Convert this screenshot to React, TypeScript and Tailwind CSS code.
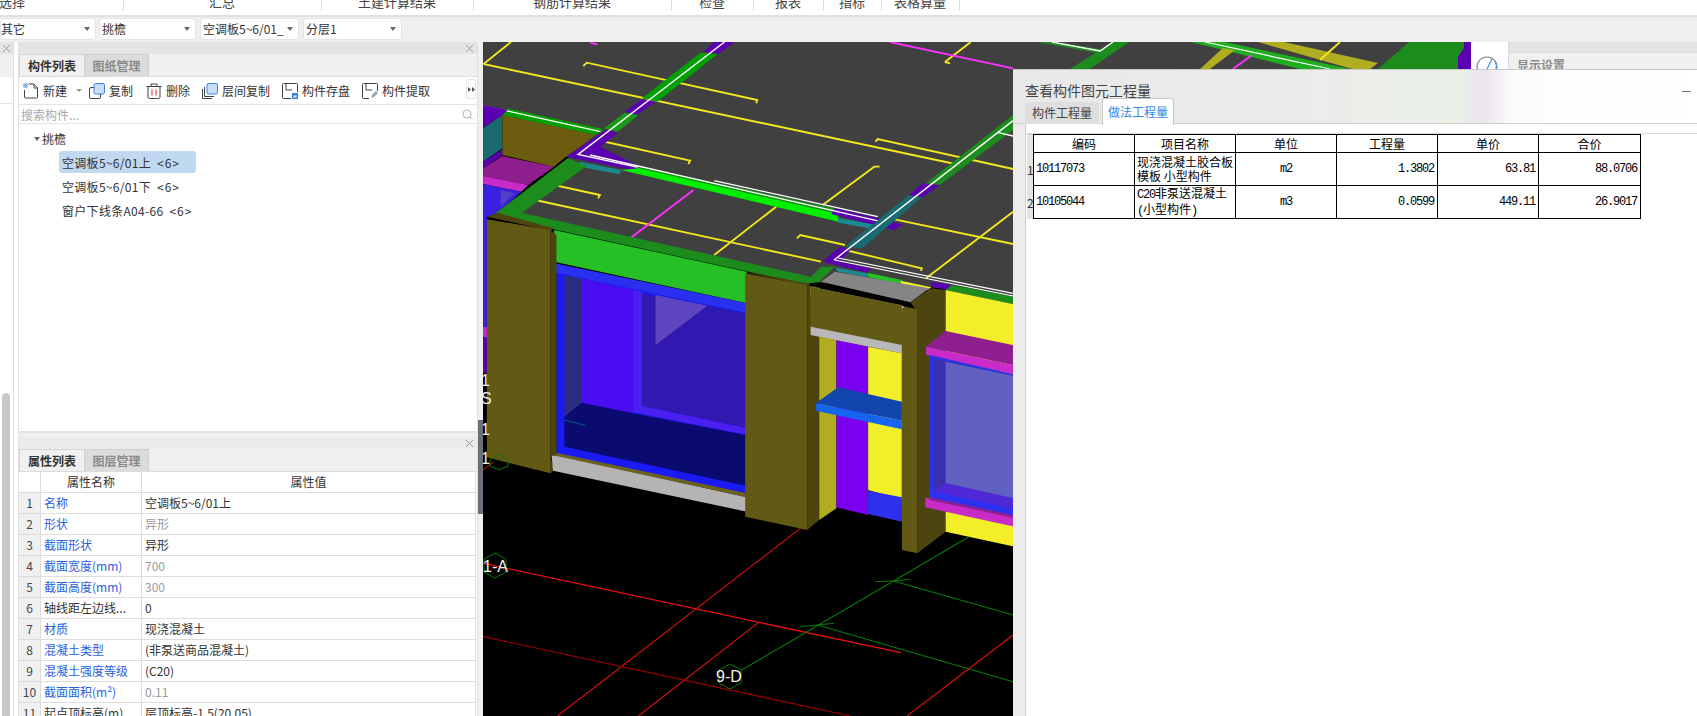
import React from "react";

const FONT = { fontFamily: '"Noto Sans CJK SC", "Liberation Sans", sans-serif' };
const MONO = { fontFamily: '"Liberation Mono", monospace' };

const P = ({ p, f }: { p: string; f: string }) => <polygon points={p} fill={f} />;
const L = ({ p, c = "#f2e81e", w = 1.9 }: { p: string; c?: string; w?: number }) => (
  <polyline points={p} fill="none" stroke={c} strokeWidth={w} vectorEffect="non-scaling-stroke" />
);

const OL = "#625a14";
const OD = "#4d4510";
const GR = "#1c8c1c";
const PU = "#5b00b0";
const TE = "#1a6b70";
const TE2 = "#1a8a90";
const MD = "#8f1f8f";
const MB = "#c82bc8";
const YE = "#f2ef2a";

function Scene() {
  return (
    <svg className="block absolute left-0 top-0" width={988} height={674} viewBox="483 42 988 674">
      <rect x={483} y={42} width={988} height={674} fill="#000" />
      <polygon points="1000,42 1500,42 1500,500 1000,500" fill="#404040" />

      <g transform="translate(480,40) scale(0.34439,0.33333)">
        {/* roof */}
        <P p="9,6 1560,6 1560,800 1350,745 950,725 50,520 260,350 9,195" f="#404040" />
        {/* roof thin lines */}
        <L p="10,72 1380,372" />
        <L p="10,72 90,6" />
        <L p="300,78 310,68 805,180 802,190" />
        <L p="340,300 610,362 605,372" />
        <L p="215,435 348,465 343,475" />
        <L p="160,480 990,665" />
        <L p="680,645 860,500" />
        <L p="995,495 1145,380 1160,380" />
        <L p="920,595 930,585 1060,615" />
        <L p="1060,630 1283,685 1280,693" />
        <L p="1148,305 1155,297 1548,387" />
        <L p="1190,535 1548,612" />
        <L p="1295,715 1548,515" />
        <L p="1350,66 1425,6" />
        <L p="1350,66 1365,70" />
        <L p="440,592 620,450" c="#ff30ff" />
        <L p="1190,6 1548,85" c="#ff30ff" />
        <L p="320,8 340,13" c="#ff30ff" />
        {/* depth band */}
        <P p="650,35 680,6 740,6 690,42" f={PU} />
        <P p="640,38 690,42 515,185 470,175" f="#00a000" />
        <P p="470,178 510,185 455,225 420,215" f={PU} />
        <P p="420,218 460,225 400,275 360,265" f="#1a9a1a" />
        <P p="365,270 400,278 350,320 460,378 450,392 250,350" f={PU} />
        <P p="65,225 80,205 360,268 335,285" f="#00a000" />
        <L p="710,6 285,343 460,382" c="#fff" w={1.4} />
        <L p="9,198 75,212 350,275" c="#fff" w={1.4} />
        {/* middle band */}
        <P p="290,365 410,390 405,403 290,380" f={TE2} />
        <P p="460,378 1030,505 1020,525 450,395" f="#1a8c1a" />
        <P p="410,390 460,385 1040,522 1040,545" f="#00ef00" />
        <P p="1030,505 1165,537 1230,555 1200,570 1020,522" f={PU} />
        <P p="1040,533 1150,555 1130,565 1040,548" f={TE2} />
        <L p="320,345 1165,545" c="#fff" w={1.3} />
        <L p="680,422 1155,530" c="#fff" w={1.3} />
        {/* right depth band */}
        <P p="1060,620 1110,625 1285,470 1245,465" f={TE} />
        <P p="1245,465 1285,430 1335,435 1285,472" f={PU} />
        <P p="1295,430 1335,435 1548,270 1548,225" f={GR} />
        <P p="995,665 1045,620 1075,630 1045,665 1135,685 1125,698" f={PU} />
        <L p="1028,660 1548,242" c="#fff" w={1.4} />
        <L p="1505,278 1548,288" c="#fff" w={1.4} />
        {/* right front band */}
        <P p="1125,698 1225,720 1220,732 1127,712" f="#26bf26" />
        <P p="1030,682 1125,700 1125,712 1040,695" f={TE2} />
        <P p="1222,722 1310,742 1300,750 1222,732" f={YE} />
        <P p="1310,725 1375,735 1360,750 1310,740" f={PU} />
        <P p="1370,735 1560,772 1560,795 1352,750" f={GR} />
        <L p="1030,660 1548,768" c="#fff" w={1.2} />
        <L p="1040,654 1548,760" c="#fff" w={1.2} />
        <P p="945,728 990,680 1030,680 985,725" f={GR} />

        {/* far left stack */}
        <P p="9,195 80,210 65,225 9,265" f={PU} />
        <P p="9,265 65,225 65,325 9,365" f={TE} />
        <P p="9,365 65,328 65,345 9,385" f={PU} />
        <P p="65,225 335,285 250,350 215,380 65,345" f="#6b5c10" />
        <P p="9,385 65,348 215,380 140,435 9,408" f={MD} />
        <P p="9,408 140,435 120,455 9,432" f={MB} />
        <P p="9,432 120,455 50,520 20,530 20,900 9,900" f="#3a20e0" />
        <P p="60,450 100,460 60,500" f="#5040c8" />
        <P p="9,860 20,862 20,892 9,890" f={MB} />
        <P p="9,890 20,892 20,1000 9,1000" f="#5b00b0" />

        {/* roof edge */}
        <P p="255,355 310,378 120,520 45,520" f={GR} />
        <P p="45,520 120,518 950,708 990,725 945,732 200,565" f={GR} />
        {/* fascia */}
        <P p="215,570 775,695 775,790 215,665" f="#26bf26" />

        {/* main window */}
        <P p="222,695 775,820 775,1365 222,1240" f="#1a1af5" />
        <P p="245,705 295,716 295,1090 245,1130" f="#2d2d80" />
        <P p="295,716 445,750 445,1120 295,1090" f="#4a0cf0" />
        <P p="470,760 775,822 775,1165 470,1098" f="#3018b0" />
        <P p="510,765 660,797 510,915" f="#6045c0" />
        <P p="445,750 470,755 470,1098 775,1165 775,1185 445,1116" f="#4a20f0" />
        <P p="245,1130 295,1088 445,1120 775,1186 775,1338 245,1220" f="#0a0a70" />
        <L p="245,1140 308,1157" c="#0b5a70" w={1} />
        <P p="210,668 775,790 775,820 210,695" f="#2a30f0" />

        {/* left column */}
        <P p="20,530 50,518 215,565 205,572" f={OD} />
        <P p="20,538 205,570 205,1300 20,1252" f={OL} />
        <P p="205,570 222,585 222,1245 205,1250" f={OD} />
        <P p="205,1250 215,1290 205,1300" f={OD} />

        {/* sill */}
        <P p="208,1248 225,1246 775,1372 775,1415 212,1292" f="#b4b4b4" />
        <P p="222,1238 775,1360 775,1372 222,1248" f="#6b6020" />

        {/* centre column */}
        <P p="770,697 790,698 960,732 950,738" f={OD} />
        <P p="770,700 950,736 950,1470 770,1430" f={OL} />
        <P p="950,736 985,742 985,1440 950,1470" f={OD} />

        {/* bay between columns */}
        <P p="990,725 1030,695 1305,745 1250,787" f="#858585" />
        <P p="960,740 1270,808 1270,950 960,885" f={OL} />
        <P p="960,740 1230,798 1225,822 960,765" f="#b8b8b8" />

        <g transform="translate(0,780)">
          <P p="985,110 1035,120 1035,625 985,660" f="#b0ad20" />
          <P p="1035,120 1127,140 1127,645 1035,622" f="#7b00f0" />
          <P p="1127,140 1225,160 1225,600 1127,570" f={YE} />
          <P p="1127,572 1225,592 1225,665 1127,642" f="#2e30f0" />
          <P p="1040,262 1225,305 1225,362 975,310" f="#1245ae" />
          <P p="975,310 1225,362 1225,388 975,332" f="#1665f0" />
          <P p="960,-40 1225,15 1225,135 960,80" f={OL} />
          <P p="960,80 1225,135 1225,160 960,105" f="#b8b8b8" />
          {/* right column */}
          <P p="1225,25 1270,35 1270,760 1225,750" f={OL} />
          <P p="1270,35 1250,7 1310,-35 1352,-30 1352,695 1270,760" f={OD} />
          {/* right bay */}
          <P p="1352,-30 1560,15 1560,742 1352,695" f={YE} />
          <P p="1352,93 1560,138 1560,198 1295,140" f={MD} />
          <P p="1295,140 1560,198 1560,225 1295,165" f={MB} />
          <P p="1305,165 1560,225 1560,652 1305,595" f="#2e30f0" />
          <P p="1318,175 1560,230 1560,628 1318,570" f="#3a30b0" />
          <P p="1352,185 1560,230 1560,598 1352,550" f="#6060c0" />
          <P p="1318,575 1352,550 1560,598 1560,628" f="#5028d8" />
          <P p="1293,593 1560,652 1560,682 1293,622" f={MB} />
          <P p="1305,592 1560,648 1560,656 1305,600" f={MD} />
          {/* ground grid */}
          <L p="9,790 1222,1058" c="#e81010" w={1.3} />
          <L p="930,685 225,1248" c="#e01010" w={1.1} />
          <L p="808,968 460,1248" c="#e01010" w={1.1} />
          <L p="1548,1005 1240,1248" c="#e01010" w={1.1} />
          <L p="9,1010 1075,1248" c="#a00000" w={1.1} />
          <L p="9,510 40,485" c="#e01010" w={1} />
          <L p="760,1110 1420,710" c="#0a7a0a" w={1.1} />
          <L p="1200,843 1548,945" c="#0a7a0a" w={1.1} />
          <L p="980,975 1548,1145" c="#0a7a0a" w={1.1} />
          <L p="1148,845 1200,843 1248,838" c="#0a7a0a" w={1} />
          <L p="928,980 980,975 1028,970" c="#0a7a0a" w={1} />
        </g>
      </g>

      {/* top strip behind the dialog, in page coordinates */}
      <polygon points="1037,42 1055,42 1106,50 1103,54" fill={GR} />
      <polygon points="1100,50 1113,42 1129,42 1090,69 1070,69" fill={GR} />
      <L p="1052,42 1100,51 1113,42" c="#fff" w={1.4} />
      <polygon points="1191,42 1225,42 1350,69 1300,69" fill="#1fae1f" />
      <L p="1205,42 1330,69" c="#fff" w={1.2} />
      <polygon points="1200,69 1223,48 1235,50 1210,69" fill="#b0ad20" />
      <polygon points="1258,42 1284,42 1378,63 1370,69 1352,69" fill="#b0ad20" />
      <L p="1233,69 1252,55" c="#ff30ff" />
      <L p="1320,60 1340,42" />
      <polygon points="1378,69 1409,42 1464,42 1464,48 1458,57 1458,69" fill={GR} />
      <polygon points="1458,57 1464,48 1464,42 1471,42 1471,69 1458,69" fill={PU} />

      {/* axis markers */}
      <polygon points="495,553 506,559 506,572 495,578 484,572 484,559" fill="none" stroke="#0a7a0a" />
      <polygon points="730,664 741,670 741,683 730,689 719,683 719,670" fill="none" stroke="#0a7a0a" />
      <polygon points="499,454 508,460 508,466 499,470 490,466 490,460" fill="none" stroke="#0a7a0a" />
      <g fontFamily='"Liberation Sans", sans-serif' fontSize={16} fill="#f0f0f0">
        <text x={483} y={572}>1-A</text>
        <text x={716} y={682}>9-D</text>
        <text x={481} y={386}>1</text>
        <text x={481} y={404}>S</text>
        <text x={481} y={435}>1</text>
        <text x={481} y={464}>1</text>
      </g>
    </svg>
  );
}

/* ---------- small toolbar icons ---------- */
const IconNew = () => (
  <svg width="16" height="16" viewBox="0 0 16 16" fill="none">
    <path d="M1.5 7v7a1 1 0 0 0 1 1h11a1 1 0 0 0 1-1V5L11 1H5.5" stroke="#444" />
    <path d="M11 1v4h3.5" stroke="#444" />
    <rect x="0.5" y="0.5" width="4" height="4" fill="#3b82e0" />
    <path d="M1 1h1v1H1zM3 1h1v1H3zM2 2h1v1H2zM1 3h1v1H1zM3 3h1v1H3z" fill="#cfe3fb" />
  </svg>
);
const IconCopy = () => (
  <svg width="16" height="16" viewBox="0 0 16 16" fill="none">
    <rect x="0.5" y="4.5" width="11" height="11" rx="1.5" stroke="#444" fill="#fff" />
    <rect x="5" y="0.5" width="10.5" height="10.5" rx="1.5" stroke="#3b82e0" fill="#c9dff8" />
  </svg>
);
const IconDelete = () => (
  <svg width="16" height="16" viewBox="0 0 16 16" fill="none">
    <path d="M0.5 3.5h15M5 3.5V1h6v2.5" stroke="#444" />
    <path d="M2 3.5V14a1.5 1.5 0 0 0 1.5 1.5h9A1.5 1.5 0 0 0 14 14V3.5" stroke="#444" />
    <path d="M6 6.5v6M10 6.5v6" stroke="#d92020" />
  </svg>
);
const IconFloor = () => (
  <svg width="16" height="16" viewBox="0 0 16 16" fill="none">
    <path d="M0.5 6v9.5H10" stroke="#444" />
    <path d="M2.5 4v9.5H12" stroke="#444" />
    <rect x="5" y="0.5" width="10.5" height="10.5" rx="1.5" stroke="#3b82e0" fill="#c9dff8" />
  </svg>
);
const IconSave = () => (
  <svg width="16" height="16" viewBox="0 0 16 16" fill="none">
    <path d="M9 15.5H1.5a1 1 0 0 1-1-1v-13a1 1 0 0 1 1-1h13a1 1 0 0 1 1 1V9" stroke="#444" />
    <path d="M4 1v6h6" stroke="#444" />
    <rect x="10" y="10" width="6" height="6" fill="#3b82e0" />
    <rect x="11.5" y="12.5" width="3" height="2" fill="#e6f0fc" />
  </svg>
);
const IconExtract = () => (
  <svg width="16" height="16" viewBox="0 0 16 16" fill="none">
    <path d="M7 15.5H1.5a1 1 0 0 1-1-1v-13a1 1 0 0 1 1-1h13a1 1 0 0 1 1 1V8" stroke="#444" />
    <path d="M4 1v6h6" stroke="#444" />
    <path d="M9 15l1-3 4-4 2 2-4 4z" fill="#9aa3ad" />
  </svg>
);

const Close = ({ c = "#9a9a9a" }: { c?: string }) => (
  <svg width="9" height="9" viewBox="0 0 9 9" stroke={c} fill="none">
    <path d="M1 1l7 7M8 1L1 8" />
  </svg>
);

const Caret = () => <span className="w-0 h-0 border-x-[3px] border-x-transparent border-t-[4px] border-t-[#666]" />;

const topTabs = [
  { w: 124, t: "选择", cls: "justify-start" },
  { w: 198, t: "汇总", cls: "justify-center" },
  { w: 152, t: "土建计算结果", cls: "justify-center" },
  { w: 198, t: "钢筋计算结果", cls: "justify-center" },
  { w: 82, t: "检查", cls: "justify-center" },
  { w: 70, t: "报表", cls: "justify-center" },
  { w: 58, t: "指标", cls: "justify-center" },
  { w: 78, t: "表格算量", cls: "justify-center" },
];

const selects = [
  { w: 96, t: "其它", ml: 0 },
  { w: 97, t: "挑檐", ml: 3 },
  { w: 99, t: "空调板5~6/01_", ml: 4 },
  { w: 99, t: "分层1", ml: 4 },
];

const tools = [
  { I: IconNew, t: "新建", mr: 7 },
  { I: IconCopy, t: "复制", mr: 13 },
  { I: IconDelete, t: "删除", mr: 12 },
  { I: IconFloor, t: "层间复制", mr: 12 },
  { I: IconSave, t: "构件存盘", mr: 12 },
  { I: IconExtract, t: "构件提取", mr: 0 },
];

const rows: [string, string, boolean, string][] = [
  ["1", "名称", true, "空调板5~6/01上"],
  ["2", "形状", true, "~异形"],
  ["3", "截面形状", true, "异形"],
  ["4", "截面宽度(mm)", true, "~700"],
  ["5", "截面高度(mm)", true, "~300"],
  ["6", "轴线距左边线...", false, "0"],
  ["7", "材质", true, "现浇混凝土"],
  ["8", "混凝土类型", true, "(非泵送商品混凝土)"],
  ["9", "混凝土强度等级", true, "(C20)"],
  ["10", "截面面积(m²)", true, "~0.11"],
  ["11", "起点顶标高(m)", false, "层顶标高-1.5(20.05)"],
];

const PanelTabs = ({ a, b }: { a: string; b: string }) => (
  <div className="flex h-[23px] shrink-0 bg-[#f0f0f0] border-b border-[#dcdcdc] text-[12px] font-bold">
    <div className="w-[65px] flex items-center justify-center text-[#333] border-t border-l border-[#d4d4d4] bg-[#f0f0f0]">{a}</div>
    <div className="w-[65px] flex items-center justify-center text-[#8a8a8a] bg-[#dcdcdc] border-t border-x border-[#cfcfcf]">{b}</div>
  </div>
);

const TreeItem = ({ name, sel }: { name: string; sel?: boolean }) => (
  <div className={`ml-[25px] h-[22px] flex items-center pl-[3px] pt-[1px] mb-[2px] ${sel ? "w-[137px] rounded-[3px] bg-[#c0d8f0]" : ""}`}>
    <span className="tracking-[0.3px]">{name}</span>
    <span className="ml-[6px] tracking-[1px]">&lt;6&gt;</span>
  </div>
);

const tdM = "border border-black p-0 text-[12px] tracking-[-1.2px]";
const M = ({ children }: { children: React.ReactNode }) => (
  <span className="text-[12px] tracking-[-1.2px]" style={MONO}>{children}</span>
);

export default function App() {
  return (
    <div className="relative w-[1697px] h-[716px] overflow-hidden bg-white text-[12px] text-[#333] flex flex-col" style={FONT}>
      {/* ribbon group labels */}
      <div className="h-[17px] flex bg-white border-b-2 border-[#e0e0e0] overflow-hidden">
        {topTabs.map((g) => (
          <div key={g.t} style={{ width: g.w }} className={`h-[11px] flex items-center border-r border-[#dcdcdc] ${g.cls} text-[13px] text-[#444] leading-none`}>
            <span className="-mt-[9px] -ml-[1px]">{g.t}</span>
          </div>
        ))}
      </div>

      {/* selector bar */}
      <div className="h-[25px] bg-[#f0f0f0] flex pt-[1px]">
        {selects.map((s) => (
          <div key={s.t} style={{ width: s.w, marginLeft: s.ml }} className="h-[22px] bg-white border border-[#e4e4e4] rounded-[3px] flex items-center justify-between pr-[5px] text-[#333] text-[12px]">
            <span className={s.ml === 0 ? "" : "pl-[2px]"}>{s.t}</span>
            <Caret />
          </div>
        ))}
      </div>

      {/* workspace */}
      <div className="flex-1 flex min-h-0">
        {/* left strip */}
        <div className="w-[18px] flex flex-col shrink-0 bg-white">
          <div className="w-[14px] h-full border-r border-[#dcdcdc] flex flex-col">
            <div className="h-[12px] bg-[#e4e4e4] flex items-center justify-center"><Close /></div>
            <div className="h-[23px] bg-[#f0f0f0]" />
            <div className="h-[27px] border-b border-[#e4e4e4]" />
            <div className="flex-1 pl-[2px] pr-[3px] pt-[289px]">
              <div className="h-full bg-[#c8c8c8] rounded-t-[4px]" />
            </div>
          </div>
        </div>

        {/* left panels */}
        <div className="w-[460px] shrink-0 flex flex-col bg-[#f0f0f0]">
          <div className="h-[391px] shrink-0 flex flex-col bg-white border-b-2 border-[#e0e0e0] border-x border-x-[#e0e0e0]">
            <div className="h-[12px] bg-[#e4e4e4] flex items-center justify-end pr-[3px]"><Close /></div>
            <PanelTabs a="构件列表" b="图纸管理" />
            <div className="h-[28px] flex items-center pl-[4px] border-b border-[#e4e4e4] relative">
              {tools.map((t) => (
                <div key={t.t} className="flex items-center gap-[4px]" style={{ marginRight: t.mr }}>
                  <t.I />
                  <span className="text-[#333] pt-[1px]">{t.t}</span>
                  {t.t === "新建" && (
                    <span className="ml-[5px]"><span className="block w-0 h-0 border-x-[3px] border-x-transparent border-t-[3px] border-t-[#999]" /></span>
                  )}
                </div>
              ))}
              <div className="absolute right-[1px] top-[2px] w-[10px] h-[20px] bg-white border border-[#e4e4e4] rounded-[2px] flex items-center justify-center">
                <svg width="7" height="5" viewBox="0 0 7 5" fill="#555"><path d="M0 0l3 2.5L0 5zM4 0l3 2.5L4 5z" /></svg>
              </div>
            </div>
            <div className="h-[19px] flex items-center justify-between px-[2px] pt-[1px] border-b border-[#e4e4e4]">
              <span className="text-[#a8a8a8]">搜索构件...</span>
              <svg width="11" height="11" viewBox="0 0 11 11" fill="none" stroke="#b4b4b4" className="mr-[2px]">
                <circle cx="5" cy="5" r="4" />
                <path d="M8 8l2.5 2.5" />
              </svg>
            </div>
            <div className="flex-1 flex flex-col pt-[3px] pl-[15px]">
              <div className="h-[24px] flex items-center gap-[2px]">
                <Caret />
                <span>挑檐</span>
              </div>
              <TreeItem name="空调板5~6/01上" sel />
              <TreeItem name="空调板5~6/01下" />
              <TreeItem name="窗户下线条A04-66" />
            </div>
          </div>

          <div className="mt-[4px] flex-1 min-h-0 flex flex-col bg-white border-x border-[#e0e0e0] overflow-hidden">
            <div className="h-[12px] bg-[#ebebeb] flex items-center justify-end pr-[3px] shrink-0"><Close /></div>
            <PanelTabs a="属性列表" b="图层管理" />
            <div className="w-[457px] shrink-0">
              <div className="flex h-[21px] border-b border-[#dcdcdc]">
                <div className="w-[22px] border-r border-[#dcdcdc]" />
                <div className="w-[101px] border-r border-[#dcdcdc] flex items-center justify-center">属性名称</div>
                <div className="flex-1 border-r border-[#dcdcdc] flex items-center justify-center">属性值</div>
              </div>
              {rows.map(([n, name, blue, val]) => {
                const dim = val.startsWith("~");
                return (
                  <div key={n} className="flex h-[21px] border-b border-[#dcdcdc]">
                    <div className="w-[22px] bg-[#f0f0f0] border-r border-[#dcdcdc] flex items-center justify-center text-[#444]">{n}</div>
                    <div className={`w-[101px] border-r border-[#dcdcdc] flex items-center pl-[3px] ${blue ? "text-[#2a5fe0]" : "text-[#333]"}`}>{name}</div>
                    <div className={`flex-1 border-r border-[#dcdcdc] flex items-center pl-[3px] ${dim ? "text-[#999]" : "text-[#333]"}`}>{dim ? val.slice(1) : val}</div>
                  </div>
                );
              })}
            </div>
          </div>
        </div>

        {/* gutter with splitter */}
        <div className="w-[5px] shrink-0 bg-[#f0f0f0] flex flex-col pt-[378px]">
          <div className="h-[94px] bg-[#6a7078]" />
        </div>

        {/* 3D canvas */}
        <div className="relative flex-1 min-w-0 overflow-hidden bg-black">
          <Scene />
        </div>

        {/* mini navigator */}
        <div className="w-[32px] shrink-0 bg-white flex justify-center pt-[14px]">
          <svg width="22" height="22" viewBox="0 0 22 22" fill="none" className="shrink-0">
            <circle cx="11" cy="11" r="10" stroke="#7d8a9a" strokeWidth="1.2" />
            <path d="M19 5 A10 10 0 0 1 20 13 M16 3 L8 19" stroke="#4a90e8" strokeWidth="1.2" />
          </svg>
        </div>
        <div className="w-[5px] shrink-0 bg-white" />

        {/* right panel */}
        <div className="w-[189px] shrink-0 bg-[#f0f0f0] border-l border-[#dcdcdc]">
          <div className="h-[11px] bg-[#e4e4e4] border-b border-[#dcdcdc]" />
          <div className="pl-[8px] pt-[3px] text-[12px] font-bold text-[#8a8a8a]">显示设置</div>
        </div>
      </div>

      {/* floating dialog */}
      <div className="absolute left-[1013px] top-[69px] right-0 bottom-0 bg-white border-t border-[#c8c8c8] flex flex-col">
        <div className="relative h-[54px] shrink-0 border-b border-[#cfcfcf] bg-[linear-gradient(90deg,#e8e8e8_0%,#ececea_45%,#e9f0e6_65%,#ebe4f0_69%,#fcfcfc_73%,#ffffff_100%)]">
          <div className="absolute left-[12px] top-[10px] text-[14px] leading-[20px] text-[#444]">查看构件图元工程量</div>
          <div className="absolute right-[6px] top-[21px] w-[9px] h-px bg-[#777]" />
          <div className="absolute left-[12px] top-[32px] w-[74px] h-[22px] bg-[#dedede] rounded-t-[3px] flex items-center justify-center text-[12px] text-[#444]">构件工程量</div>
          <div className="absolute left-[89px] top-[28px] w-[72px] h-[27px] bg-white border border-b-0 border-[#c8c8c8] rounded-t-[3px] flex items-center justify-center text-[12px] text-[#2f86e6]">做法工程量</div>
        </div>
        <div className="flex-1 flex min-h-0">
          <div className="w-[13px] shrink-0 bg-[#ececec] border-r border-[#cfcfcf]" />
          <div className="flex-1 min-w-0">
            <div className="h-[10px] border-b border-[#d8d8d8]" />
            <div className="pl-[1px]">
              <div className="flex">
                <div className="w-[6px] shrink-0 flex flex-col text-[12px] text-[#333] bg-[#e4e4e4] border-t border-[#c8c8c8] overflow-hidden">
                  <div className="h-[18px]" />
                  <div className="h-[33px] flex items-center">1</div>
                  <div className="h-[33px] flex items-center">2</div>
                </div>
                <table className="table-fixed border-collapse text-black text-[12px] leading-[14px] w-[607px]">
                  <colgroup>
                    {[101, 101, 101, 101, 101, 102].map((w, i) => (
                      <col key={i} style={{ width: w }} />
                    ))}
                  </colgroup>
                  <tbody>
                    <tr className="h-[18px]">
                      {["编码", "项目名称", "单位", "工程量", "单价", "合价"].map((h) => (
                        <td key={h} className="border border-black text-center p-0">{h}</td>
                      ))}
                    </tr>
                    <tr className="h-[33px]">
                      <td className={`${tdM} pl-[2px]`} style={MONO}>10117073</td>
                      <td className="border border-black p-0 pl-[2px]">现浇混凝土胶合板<br />模板 小型构件</td>
                      <td className={`${tdM} text-center`} style={MONO}>m2</td>
                      <td className={`${tdM} pr-[3px] text-right`} style={MONO}>1.3802</td>
                      <td className={`${tdM} pr-[3px] text-right`} style={MONO}>63.81</td>
                      <td className={`${tdM} pr-[3px] text-right`} style={MONO}>88.0706</td>
                    </tr>
                    <tr className="h-[33px]">
                      <td className={`${tdM} pl-[2px]`} style={MONO}>10105044</td>
                      <td className="border border-black p-0 pl-[2px]"><M>C20</M>非泵送混凝土<br /><M>(</M>小型构件<M>)</M></td>
                      <td className={`${tdM} text-center`} style={MONO}>m3</td>
                      <td className={`${tdM} pr-[3px] text-right`} style={MONO}>0.0599</td>
                      <td className={`${tdM} pr-[3px] text-right`} style={MONO}>449.11</td>
                      <td className={`${tdM} pr-[3px] text-right`} style={MONO}>26.9017</td>
                    </tr>
                  </tbody>
                </table>
              </div>
            </div>
          </div>
        </div>
      </div>
    </div>
  );
}
